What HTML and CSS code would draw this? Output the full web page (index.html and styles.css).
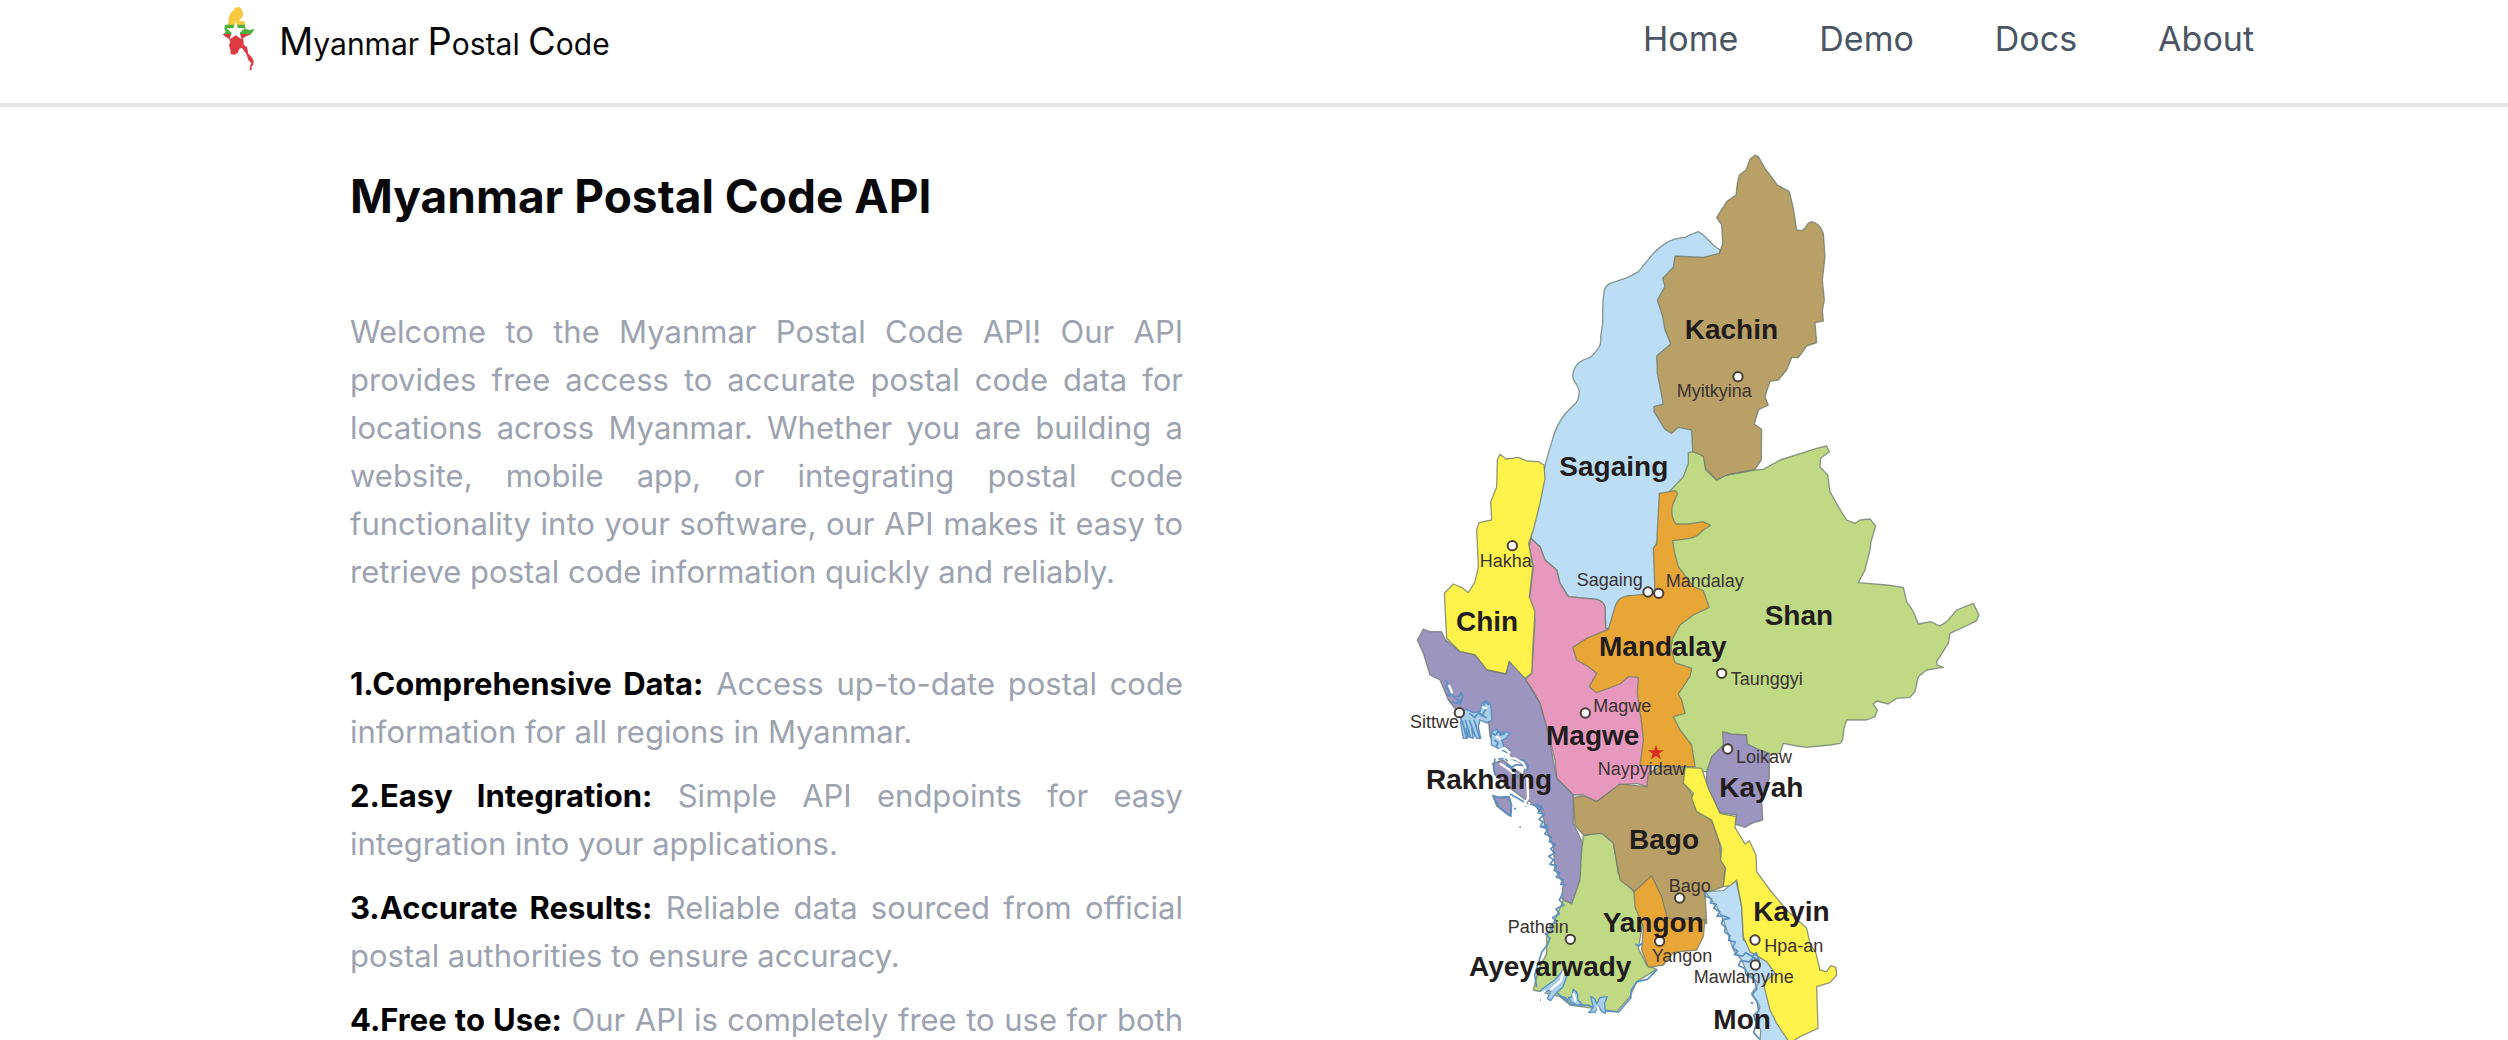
FILE: index.html
```html
<!DOCTYPE html>
<html lang="en">
<head>
<meta charset="utf-8">
<meta name="viewport" content="width=device-width, initial-scale=1">
<title>Myanmar Postal Code</title>
<link rel="stylesheet" href="styles.css">
</head>
<body>
<header class="header">
  <a class="brand" href="#">
    <svg class="brand-icon" viewBox="15 15 111 201" aria-hidden="true">
      <path fill="#f8c93f" d="M72 20l5 4 5 8 3 12-5 10-9 8 18 2 1 8 0 4H37l5-12-2-10 8-16 8-8 4-6z"/>
      <path fill="#4fae3c" d="M30 74h60l2 13 12 3 15-3-6 9-7 8H24l8-9-4-9z"/>
      <path fill="#dc3b42" d="M22 102h86l-14 7-10 6 2 12 0 8 10 6 4 20 9 9 7 12-1 12-6 6 2 8-7 4 1-14 4-8-9-10-6-18-9-12-4-6-8 2-5 13-10 5-11-2-1-12-4-14 4-10-4-10-11-6z"/>
      <path fill="#fff" d="M62 64l7 20 21 1-16 13 6 20-18-12-18 12 6-20-16-13 21-1z"/>
    </svg>
    <span class="brand-name"><b>M</b>yanmar <b>P</b>ostal <b>C</b>ode</span>
  </a>
  <nav class="nav">
    <a href="#">Home</a>
    <a href="#">Demo</a>
    <a href="#">Docs</a>
    <a href="#">About</a>
  </nav>
</header>
<main class="hero">
  <section class="intro">
    <h1>Myanmar Postal Code API</h1>
    <p class="lead">Welcome to the Myanmar Postal Code API! Our API provides free access to accurate postal code data for locations across Myanmar. Whether you are building a website, mobile app, or integrating postal code functionality into your software, our API makes it easy to retrieve postal code information quickly and reliably.</p>
    <ul class="features">
      <li><strong>1.Comprehensive Data:</strong> Access up-to-date postal code information for all regions in Myanmar.</li>
      <li><strong>2.Easy Integration:</strong> Simple API endpoints for easy integration into your applications.</li>
      <li><strong>3.Accurate Results:</strong> Reliable data sourced from official postal authorities to ensure accuracy.</li>
      <li class="full"><strong>4.Free to Use:</strong> Our API is completely free to use for both</li>
    </ul>
  </section>
  <svg class="map" viewBox="-165 -1260 2499 2700" role="img" aria-label="Map of the regions of Myanmar">
    <g class="regions">
      <path class="blue" transform="translate(0 -1020)" d="M955 35Q935 42 915 52Q880 55 860 68Q840 80 820 100L775 155Q755 168 735 175L690 190Q674 200 672 215Q668 240 668 270L668 310 662 350Q664 370 658 380Q645 402 630 412Q605 420 595 430 580 445 578 465 578 480 590 495 600 510 597 522 595 540 588 548L555 582Q530 615 520 650L505 700 495 735 490 780 470 850 452 955 480 980 495 1020 530 1050 540 1090 565 1130 650 1138Q675 1145 675 1165L677 1225 710 1225 900 1110 900 820 940 700 1000 700 1020 90 1000 75 970 45Z"/>
      <path class="green" transform="translate(780 -420)" d="M145 97L170 94 192 110 197 150 230 180 260 165 345 150 370 148 420 120 530 85 560 78 568 95 542 115 540 140 563 165 570 215 595 260 620 300 645 310 660 300 690 297 707 318 693 365 690 390 675 450 655 488 740 495 790 502 800 545 820 575 835 612 872 605 900 618 920 605 950 570 1000 550 1017 585 1010 602 985 615 930 640 925 670 890 725 892 735 910 742 860 750 835 770 825 815 810 832 770 835 745 852 710 843 700 852 712 870 705 890 680 900 620 900 612 925 608 960 600 970 570 975 500 982 470 978 430 970 420 1000 300 1010 220 1010 215 1055 150 1055 90 900 60 700 60 560 100 500 60 400 90 213 130 170 145 130Z"/>
      <path class="tan" transform="translate(780 -1260)" d="M345 45L330 58 318 90 298 105 292 130 288 165 260 185 230 232 245 255 248 312 238 340 190 352 105 348 100 382 68 415 75 440 52 480 68 530 75 570 92 612 50 648 52 700 70 792 42 800 42 815 75 868 95 880 115 862 155 870 158 935 190 948 197 985 230 1020 260 1005 345 988 364 960 365 868 343 852 355 810 385 795 375 770 390 724 415 720 440 690 455 653 475 653 500 618 530 608 525 548 550 543 547 512 553 480 547 420 555 350 550 280Q540 250 515 245 502 248 495 265L485 272 470 270 460 205 448 155 412 135 375 85 355 50Z"/>
      <path class="pink" d="M452 -65L480 -40 495 0 530 30 540 70 565 110 650 118Q675 125 675 145L677 205 800 210 810 680 800 680 770 670 720 675 650 725 610 705 580 705 530 655 525 600 505 520 480 430 455 385 435 360 455 340 465 180 448 120 460 20 448 -40Z"/>
      <path class="yellow" d="M360 -317L378 -303 415 -308 440 -297 475 -295 492 -285 495 -245 480 -170 460 -90 446 -50 458 20 448 110 465 155 458 270 455 340 435 355 410 335 388 305 378 342 320 330 285 285 240 275 200 235 193 100 220 72 245 82 265 98 285 65 295 20 290 -90 297 -112 335 -120 332 -175 350 -220 352 -300Z"/>
      <path class="purple" d="M130 207L150 215 185 215 195 238 240 275 285 285 320 330 378 342 388 305 435 355 480 430 505 520 530 655 580 705 580 790 608 850 605 940 590 1020 570 1032 545 1015 550 970 525 930 520 860 495 800 488 760 455 728 430 715 385 680 345 645 338 610 370 600 400 625 430 645 435 620 395 590 372 565 345 555 330 530 326 490 300 480 250 490 232 455 205 420 180 360 150 345 130 280 112 240Z"/>
      <path class="purple" d="M338 706L365 715 388 710 395 735 394 760 385 765 350 738Z"/>
      <path class="green" d="M610 828L640 820 670 817 700 845 715 940 765 1000 790 1080 775 1165 800 1215 830 1228 770 1265 750 1310 710 1355 690 1352 640 1345 570 1335 540 1310 500 1300 460 1290 475 1230 500 1180 500 1130 525 1080 550 1020 575 1032 600 960 605 870Z"/>
      <path class="tan" transform="translate(540 480)" d="M40 232L72 228 110 245 180 192 260 200 265 160 300 140 370 140 375 190 400 230 410 275 455 300 480 370 482 410 495 440 490 500 435 520 438 570 440 610 320 610 225 515 180 480 160 370 125 340 70 345 45 315Z"/>
      <path class="orange" d="M838 -200L885 -208 893 -200 878 -165Q870 -130 888 -108L925 -108 970 -115 992 -104 970 -90Q950 -68 930 -65L878 -58 884 -20 895 20 940 80 970 92 988 142 940 165 900 195 878 235 873 265 885 308 935 325 930 350 895 402 905 420 915 460 880 470 900 510 935 555 945 620 905 620 780 616 790 540 785 490 772 400 775 352 745 350 720 372 650 398 628 380 650 340 625 320 590 300 578 262 620 235 685 208 705 140Q715 105 760 106L825 100 820 -35 830 -50Z"/>
      <path class="orange" transform="translate(540 480)" d="M275 467L305 530 322 595 435 600 430 650 410 690 340 697 310 735 265 742 245 690 250 620 225 560 222 515Z"/>
      <path class="purple" transform="translate(540 480)" d="M488 35L515 42 560 45 562 72 600 90 628 100 628 175 605 240 608 300 575 310 555 322 525 312 530 285 480 278 440 200 440 155 455 110 490 75Z"/>
      <path class="blue" transform="translate(540 480)" d="M435 515L490 512 528 480 545 560 550 660 640 720 660 880 700 970 600 970 602 930 585 900 600 860 575 820 595 790 560 755 545 720 520 690 505 645 490 600 470 560Z"/>
      <path class="yellow" transform="translate(540 480)" d="M375 142L425 145 445 205 480 280 528 290 525 322 555 372 568 362 588 405 590 455 630 510 680 570 740 625 750 670 768 700 780 750 800 755 812 737 828 742 830 765 810 788 770 800 774 925 720 950 690 970 650 910 630 870 610 790 645 760 620 725 570 695 550 650 545 560 530 480 510 497 490 500 497 445 482 420 485 385 455 300 410 275 395 235 400 220 370 190Z"/>
    </g>
    <g class="coast">
      <g transform="translate(150 330)">
        <path class="inlet" d="M95 125L110 118 130 128 150 125 155 100 170 92 182 105 186 150 170 158 150 150 145 170 152 205 140 205 125 175 130 205 115 200 108 175 112 205 100 205 92 160Z"/>
        <path class="inlet" d="M184 185L200 178 212 190 228 185 240 190 228 205 215 212 222 230 240 238 235 250 215 240 200 232 184 225Z"/>
        <path d="M45 30l8 8-6 14 10 8-4 18 12-6 8 10 14-4 6-10 6 12-8 16-14 4-14-6M62 60l4 14M80 88l14 6-6 12M96 150l14 54M106 150l16 54M118 150l18 50M132 150l18 56M118 130l16 12 12-14 10 10 12-22-8-12 8-8 8 10M150 130l20 14M184 188l14 8 6-14 8 14 14-6M192 210l12 8-6 14M205 268l20-4 8 10M195 265l-4 30 4 20M222 260l18 4 18 8 22-2 14 14-2 16-14-14-20-2-14 8-16-10M228 285l14 10 12 12 10 16M188 378l18 4 26-2 12 24-2 32M190 382l20 32 30 24M292 320l0 84M252 416h6M240 438h6M286 408h6M268 471h5"/>
        <path class="channel" d="M208 240l16-6 14 14-8 12M222 262l34 4 24 14 6 14M212 282l22 14 20 18M292 325l2 60-10 16 12 8M58 48l8 20M160 112l8 2M200 200l8 6"/>
        <path d="M240 372l22 12 20 12M300 402l20 6 6 14 12-5-5-12 M320 400l14 16-10 12 18 5-15 15 12 8-8 14 18 5"/>
      </g>
      <path d="M486 800l14-6 4 15-10 12 20 10-6 14 18 8-14 14 12 12-18 10 14 10-10 14 20 4-8 14 18 8-12 12 22 8-8 14 18 2M548 1000l-10 20 14 15-24 12 10 14-20 12 12 12-20 12 10 18-24 6 14 14-8 20-16 20-10 30-12 40 6 36M790 1148l-14 10-10-6M832 1228l-30 30-32 8-16 24-2 24-36 42-50-4-20-20M660 1350l-36-14-50-2-34-28-22-20"/>
      <g transform="translate(420 1020)">
        <path class="inlet" d="M132 205L142 225 128 262 108 280 92 302 82 296 94 268 75 278 60 272 82 256 104 240 120 222Z"/>
        <path class="inlet" d="M160 268L172 280 174 300 186 312 172 316 155 308 145 292 155 292Z"/>
        <path class="inlet" d="M212 290L224 296 230 312 240 292 262 290 254 308 256 340 246 336 236 318 226 336 206 338 220 322Z"/>
        <path class="channel" d="M130 215l-8 28-30 26M160 282l6 20M234 322l2 14M60 280l14-6"/>
        <path d="M60 300h3M120 290l14 2 12 10"/>
      </g>
      <path transform="translate(540 480)" d="M433 514l4 15 18 8-4 12 18 4-8 12 18 10-8 14 18-2 20 8-20 4-5 12 12 10-2 15 16 10-4 15 20 5-8 16 15 12-10 10 25 4 10-10 20 12 10-12 10 24-18-10-12 14-25-4-8 14 20 10 4 20 24 12 8 28-15 18 15 20 5 28-15 14 8 24-8 28 18 20M572 848l8 2"/>
    </g>
    <path class="capital" d="M828 556l6 15h17l-14 10 6 17-15-10-16 10 6-17-14-10h18z"/>
    <g class="towns">
      <circle cx="1074" cy="-550" r="14"/><circle cx="397" cy="-43" r="14"/>
      <circle cx="804" cy="96" r="14"/><circle cx="836" cy="100" r="14"/>
      <circle cx="1025" cy="340" r="14"/><circle cx="616" cy="459" r="14"/>
      <circle cx="238" cy="458" r="14"/><circle cx="1043" cy="567" r="14"/>
      <circle cx="899" cy="1014" r="14"/><circle cx="839" cy="1144" r="14"/>
      <circle cx="571" cy="1138" r="14"/><circle cx="1125" cy="1140" r="14"/>
      <circle cx="1126" cy="1215" r="14"/>
    </g>
    <g class="town-names">
      <text x="890" y="-490">Myitkyina</text>
      <text x="299" y="22">Hakha</text>
      <text x="590" y="77">Sagaing</text>
      <text x="857" y="80">Mandalay</text>
      <text x="1052" y="375">Taunggyi</text>
      <text x="640" y="455">Magwe</text>
      <text x="90" y="505">Sittwe</text>
      <text x="653" y="644">Naypyidaw</text>
      <text x="1068" y="609">Loikaw</text>
      <text x="866" y="996">Bago</text>
      <text x="383" y="1119">Pathein</text>
      <text x="815" y="1205">Yangon</text>
      <text x="1153" y="1175">Hpa-an</text>
      <text x="941" y="1270">Mawlamyine</text>
    </g>
    <g class="region-names">
      <text x="914" y="-663">Kachin</text>
      <text x="538" y="-253">Sagaing</text>
      <text x="1154" y="195">Shan</text>
      <text x="228" y="213">Chin</text>
      <text x="657" y="287">Mandalay</text>
      <text x="498" y="556">Magwe</text>
      <text x="138" y="687">Rakhaing</text>
      <text x="1018" y="710">Kayah</text>
      <text x="747" y="867">Bago</text>
      <text x="668" y="1116">Yangon</text>
      <text x="1120" y="1083">Kayin</text>
      <text x="267" y="1248">Ayeyarwady</text>
      <text x="1000" y="1407">Mon</text>
    </g>
  </svg>
</main>
</body>
</html>
```
FILE: styles.css
```css
* {
  box-sizing: border-box;
}

body {
  margin: 0;
  height: 100vh;
  overflow: hidden;
  background: #fff;
  color: #09090b;
  font-family: Inter, "Liberation Sans", sans-serif;
}

a {
  color: inherit;
  text-decoration: none;
}

.header {
  display: flex;
  justify-content: space-between;
  padding: 5px 254px 31px 220px;
  border-bottom: 4px solid #e4e4e7;
}

.brand {
  display: flex;
  align-items: flex-start;
  gap: 22px;
}

.brand-icon {
  width: 37px;
  height: 67px;
}

.brand-name {
  padding-top: 12px;
  font-size: 30px;
  line-height: 48px;
}

.brand-name b {
  font-size: 38px;
  font-weight: 400;
}

.nav {
  display: flex;
  align-items: center;
  gap: 81px;
  color: #4b5563;
  font-size: 34px;
  line-height: 64px;
}

.hero {
  display: grid;
  grid-template-columns: 1fr 1fr;
  gap: 142px;
  align-items: start;
  padding: 33px 350px 0;
}

.intro {
  padding-top: 24px;
}

h1 {
  margin: 0 0 80px;
  font-size: 46px;
  line-height: 64px;
  font-weight: 700;
}

.lead,
.features {
  margin: 0;
  padding: 0;
  color: #9ca3af;
  font-size: 31px;
  line-height: 48px;
  text-align: justify;
}

.features {
  display: flex;
  flex-direction: column;
  gap: 16px;
  margin-top: 64px;
  list-style: none;
}

.features strong {
  color: #000;
  font-weight: 700;
}

.features .full {
  text-align-last: justify;
}

.map {
  display: block;
  width: 100%;
  height: auto;
}

.regions path {
  stroke: #6b7a6c;
  stroke-opacity: 0.75;
  stroke-width: 4;
  stroke-linejoin: round;
}

.blue { fill: #bbddf5; }
.green { fill: #bfd985; }
.tan { fill: #b9a067; }
.pink { fill: #e799bd; }
.yellow { fill: #fff34b; }
.purple { fill: #9c95c0; }
.orange { fill: #e8a636; }

.coast path {
  fill: none;
  stroke: #5b8fc4;
  stroke-width: 5;
  stroke-linejoin: round;
}

.coast .inlet {
  fill: #a9cfe8;
  stroke-width: 4;
}

.coast .channel {
  stroke: #fff;
  stroke-width: 7;
  stroke-linecap: round;
}

.capital {
  fill: #d62f20;
}

.towns circle {
  fill: #fff;
  stroke: #4a4038;
  stroke-width: 6;
}

.town-names,
.region-names {
  font-family: "Liberation Sans", Arial, sans-serif;
}

.town-names {
  fill: #3a3230;
  font-size: 54px;
}

.region-names {
  fill: #221c1c;
  font-size: 84px;
  font-weight: 700;
}
```
